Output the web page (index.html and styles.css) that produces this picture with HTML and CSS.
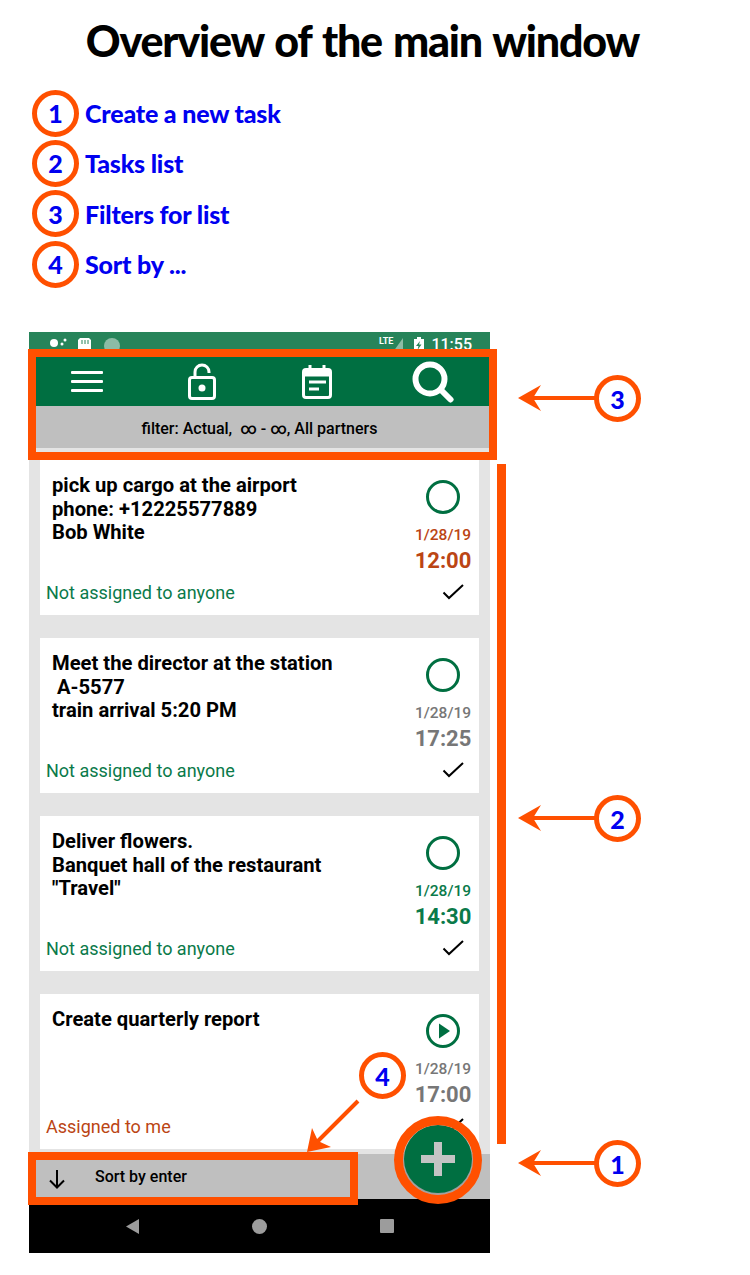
FILE: index.html
```html
<!DOCTYPE html>
<html lang="en">
<head>
    <meta charset="UTF-8">
    <meta name="viewport" content="width=device-width, initial-scale=1.0">
    <title>Overview of the main window</title>
    <link rel="stylesheet" href="styles.css">
</head>
<body>
    <div class="page">
        <h1>Overview of the main window</h1>

        <ul class="legend">
            <li><span class="badge">1</span>Create a new task</li>
            <li><span class="badge">2</span>Tasks list</li>
            <li><span class="badge">3</span>Filters for list</li>
            <li><span class="badge">4</span>Sort by ...</li>
        </ul>

        <div class="phone">
            <div class="statusbar">
                <svg class="status-left" width="72" height="18" viewBox="0 0 72 18">
                    <circle cx="5" cy="6" r="4" fill="#fff"/>
                    <circle cx="13" cy="7" r="1.500" fill="#fff"/>
                    <circle cx="16" cy="3" r="1.500" fill="#fff"/>
                    <path d="M31 1h9l2 2v15H29V3z" fill="#fff"/>
                    <path d="M33 3v4M36 3v4M39 3v4" stroke="#27845a"/>
                    <circle cx="63" cy="9" r="8" fill="#8cbca5"/>
                </svg>
                <span class="lte">LTE</span>
                <svg class="signal" width="10" height="14" viewBox="0 0 10 14"><path d="M10 0v14H0z" fill="#8cbca5"/></svg>
                <svg class="battery" width="10" height="16" viewBox="0 0 10 16"><path d="M3 0h4v2h3v14H0V2h3z" fill="#fff"/><path d="M6 4L2 9h2.500l-1 4 4-5.500H5z" fill="#27845a"/></svg>
                <span class="clock">11:55</span>
            </div>

            <div class="toolbar">
                <svg width="32" height="22" viewBox="0 0 32 22" fill="#fff">
                    <rect y="0" width="32" height="3" rx="1"/>
                    <rect y="9" width="32" height="3" rx="1"/>
                    <rect y="18" width="32" height="3" rx="1"/>
                </svg>
                <svg width="30" height="38" viewBox="0 0 30 38" fill="none" stroke="#fff" stroke-width="3">
                    <rect x="2.500" y="14.500" width="25" height="21" rx="2.500"/>
                    <path d="M8 14V9a7 7 0 0 1 14 0v1"/>
                    <circle cx="15" cy="25" r="3.500" fill="#fff" stroke="none"/>
                </svg>
                <svg width="32" height="36" viewBox="0 0 32 36" fill="none" stroke="#fff">
                    <rect x="2.500" y="5.500" width="27" height="28" rx="2.500" stroke-width="3"/>
                    <path d="M2 9h28" stroke-width="7"/>
                    <path d="M9 1v5M23 1v5" stroke-width="3"/>
                    <path d="M8 18h17" stroke-width="3"/>
                    <path d="M8 25h10" stroke-width="3"/>
                </svg>
                <svg class="tool-search" width="42" height="42" viewBox="0 0 42 42" fill="none" stroke="#fff" stroke-width="6" stroke-linecap="round">
                    <circle cx="18" cy="18" r="14.500"/>
                    <path d="M29 29l9.500 9.500"/>
                </svg>
            </div>
            <div class="filter">filter: Actual,&nbsp; ∞ - ∞, All partners</div>

            <div class="list">
                <div class="card">
                    <div class="card-main">
                        <p class="task">pick up cargo at the airport<br>phone: +12225577889<br>Bob White</p>
                        <div class="when late">
                            <svg class="state" width="36" height="36" viewBox="0 0 36 36"><circle cx="18" cy="18" r="15.500"/></svg>
                            <span class="date">1/28/19</span>
                            <span class="time">12:00</span>
                        </div>
                    </div>
                    <div class="card-foot">
                        <span class="owner">Not assigned to anyone</span>
                        <svg class="check" width="22" height="16" viewBox="0 0 22 16"><path d="M1.500 8.500l5.500 5.500L21 1"/></svg>
                    </div>
                </div>

                <div class="card">
                    <div class="card-main">
                        <p class="task">Meet the director at the station<br>&nbsp;A-5577<br>train arrival 5:20 PM</p>
                        <div class="when">
                            <svg class="state" width="36" height="36" viewBox="0 0 36 36"><circle cx="18" cy="18" r="15.500"/></svg>
                            <span class="date">1/28/19</span>
                            <span class="time">17:25</span>
                        </div>
                    </div>
                    <div class="card-foot">
                        <span class="owner">Not assigned to anyone</span>
                        <svg class="check" width="22" height="16" viewBox="0 0 22 16"><path d="M1.500 8.500l5.500 5.500L21 1"/></svg>
                    </div>
                </div>

                <div class="card">
                    <div class="card-main">
                        <p class="task">Deliver flowers.<br>Banquet hall of the restaurant<br>"Travel"</p>
                        <div class="when soon">
                            <svg class="state" width="36" height="36" viewBox="0 0 36 36"><circle cx="18" cy="18" r="15.500"/></svg>
                            <span class="date">1/28/19</span>
                            <span class="time">14:30</span>
                        </div>
                    </div>
                    <div class="card-foot">
                        <span class="owner">Not assigned to anyone</span>
                        <svg class="check" width="22" height="16" viewBox="0 0 22 16"><path d="M1.500 8.500l5.500 5.500L21 1"/></svg>
                    </div>
                </div>

                <div class="card">
                    <div class="card-main">
                        <p class="task">Create quarterly report</p>
                        <div class="when">
                            <svg class="state" width="36" height="36" viewBox="0 0 36 36"><circle cx="18" cy="18" r="15.500"/><path class="play" d="M14 10.500v15l11-7.500z"/></svg>
                            <span class="date">1/28/19</span>
                            <span class="time">17:00</span>
                        </div>
                    </div>
                    <div class="card-foot">
                        <span class="owner mine">Assigned to me</span>
                        <svg class="check" width="22" height="16" viewBox="0 0 22 16"><path d="M1.500 8.500l5.500 5.500L21 1"/></svg>
                    </div>
                </div>
            </div>

            <div class="sortbar">
                <svg width="16" height="19" viewBox="0 0 16 19" fill="none" stroke="#000" stroke-width="2"><path d="M8 0v17.500M1 10.500l7 7 7-7"/></svg>
                <span class="sort-label">Sort by enter</span>
            </div>

            <div class="navbar">
                <svg width="14" height="15" viewBox="0 0 14 15"><path d="M14 0v15L1 7.500z" fill="#9c9c9c"/></svg>
                <svg width="15" height="15" viewBox="0 0 15 15"><circle cx="7.500" cy="7.500" r="7.500" fill="#9c9c9c"/></svg>
                <svg width="14" height="14" viewBox="0 0 14 14"><rect width="14" height="14" rx="1" fill="#9c9c9c"/></svg>
            </div>

            <div class="fab">
                <svg width="34" height="34" viewBox="0 0 34 34"><path d="M13 0h8v13h13v8H21v13h-8V21H0v-8h13z" fill="#c4c4c4"/></svg>
            </div>
        </div>

        <!-- callouts on top of the screenshot -->
        <svg class="marks" width="750" height="1275" viewBox="0 0 750 1275">
            <g fill="none" stroke="#ff5000">
                <rect x="32" y="353" width="461" height="103" stroke-width="8"/>
                <rect x="32" y="1156" width="322" height="45" stroke-width="8"/>
                <circle cx="438" cy="1160" r="39.500" stroke-width="9"/>
                <path d="M501.500 464v680" stroke-width="9"/>
                <path d="M530 398h66M530 818h66M530 1163h66M358 1101l-42 42" stroke-width="4"/>
            </g>
            <g fill="#ff5000">
                <path d="M518 398l23-13-8 13 8 13z"/>
                <path d="M518 818l23-13-8 13 8 13z"/>
                <path d="M518 1163l23-13-8 13 8 13z"/>
                <path d="M307 1152l5-24 6 13 13 6z"/>
            </g>
        </svg>
        <span class="badge callout callout-a">3</span>
        <span class="badge callout callout-b">2</span>
        <span class="badge callout callout-c">1</span>
        <span class="badge callout callout-d">4</span>
    </div>
</body>
</html>
```

FILE: styles.css
```css
/* General Reset */
* {
    margin: 0;
    padding: 0;
    box-sizing: border-box;
}

body {
    background-color: #fff;
    font-family: "Roboto", sans-serif;
    color: #000;
}

.page {
    position: relative;
    width: 750px;
    height: 1275px;
    overflow: hidden;
}

h1 {
    height: 82px;
    padding-right: 25px;
    font-family: "Lato", sans-serif;
    font-size: 43px;
    font-weight: 900;
    line-height: 82px;
    letter-spacing: -1.2px;
    word-spacing: 2px;
    text-align: center;
}

/* Legend */
.legend {
    height: 250px;
    padding: 6px 0 0 32px;
    list-style: none;
}

.legend li {
    display: flex;
    align-items: center;
    gap: 6px;
    height: 50.300px;
    font-family: "Lato", sans-serif;
    font-size: 25px;
    font-weight: 900;
    letter-spacing: -0.2px;
    color: #0000f0;
}

.badge {
    display: flex;
    flex: none;
    align-items: center;
    justify-content: center;
    width: 47px;
    height: 47px;
    background-color: #fff;
    border: 5px solid #ff5000;
    border-radius: 50%;
    font-family: "Lato", sans-serif;
    font-size: 25px;
    font-weight: 900;
    color: #0000f0;
}

/* Phone */
.phone {
    position: relative;
    display: flex;
    flex-direction: column;
    width: 461px;
    height: 921px;
    margin-left: 29px;
}

.statusbar {
    display: flex;
    align-items: flex-start;
    flex: none;
    height: 25px;
    padding: 5px 18px 0 20px;
    overflow: hidden;
    background-color: #27845a;
    color: #fff;
}

.status-left {
    margin-right: auto;
}

.lte {
    margin-top: -1px;
    font-size: 9px;
    font-weight: 700;
}

.signal {
    margin: 1px 11px 0 0;
}

.battery {
    margin-right: 7px;
}

.clock {
    margin-top: -2px;
    font-size: 16px;
    font-weight: 500;
}

.toolbar {
    display: flex;
    flex: none;
    align-items: center;
    gap: 84px;
    height: 49px;
    padding-left: 42px;
    background-color: #006f41;
}

.tool-search {
    margin-left: -5px;
}

.filter {
    flex: none;
    height: 44px;
    font-size: 16px;
    font-weight: 500;
    line-height: 45px;
    text-align: center;
    background-color: #bfbfbf;
    border-bottom: 2px solid #e4e4e4;
}

.list {
    display: flex;
    flex: 1;
    flex-direction: column;
    gap: 23px;
    padding: 10px 11px 0;
    overflow: hidden;
    background-color: #e4e4e4;
}

.card {
    display: flex;
    flex: none;
    flex-direction: column;
    height: 155px;
    background-color: #fff;
}

.card-main {
    display: flex;
    flex: none;
    justify-content: space-between;
    height: 109px;
}

.task {
    padding: 14px 0 0 12px;
    font-size: 20.200px;
    font-weight: 700;
    line-height: 23.500px;
}

.when {
    display: flex;
    flex: none;
    flex-direction: column;
    align-items: center;
    width: 72px;
    padding-top: 19px;
    color: #777;
}

.when.late {
    color: #bb4514;
}

.when.soon {
    color: #0a7a4a;
}

.state {
    flex: none;
    fill: none;
    stroke: #006f41;
    stroke-width: 3;
}

.state .play {
    fill: #006f41;
    stroke: none;
}

.date {
    flex: none;
    margin-top: 10px;
    font-size: 15.500px;
    font-weight: 500;
    line-height: 20px;
}

.time {
    flex: none;
    margin-top: 2px;
    font-size: 22px;
    font-weight: 700;
    line-height: 28px;
}

.card-foot {
    display: flex;
    flex: none;
    align-items: center;
    justify-content: space-between;
    height: 46px;
    padding: 0 15px 0 6px;
}

.owner {
    font-size: 18px;
    color: #0a7a4a;
}

.owner.mine {
    color: #bb4514;
}

.check {
    fill: none;
    stroke: #000;
    stroke-width: 2;
}

.sortbar {
    display: flex;
    flex: none;
    align-items: center;
    gap: 30px;
    height: 50px;
    padding: 5px 0 0 20px;
    font-size: 16px;
    font-weight: 500;
    background-color: #bfbfbf;
    border-top: 5px solid #e4e4e4;
}

.sort-label {
    margin-top: -5px;
}

.navbar {
    display: flex;
    flex: none;
    align-items: center;
    justify-content: space-between;
    height: 54px;
    padding: 0 96px;
    background-color: #000;
}

.fab {
    position: absolute;
    left: 375px;
    top: 793px;
    display: flex;
    align-items: center;
    justify-content: center;
    width: 68px;
    height: 68px;
    background-color: #006f41;
    border-radius: 50%;
    box-shadow: 0 1px 2px 1px #999;
}

/* Callouts */
.marks {
    position: absolute;
    left: 0;
    top: 0;
}

.callout {
    position: absolute;
}

.callout-a {
    left: 594px;
    top: 375px;
}

.callout-b {
    left: 594px;
    top: 795px;
}

.callout-c {
    left: 594px;
    top: 1140px;
}

.callout-d {
    left: 359px;
    top: 1052px;
}
```
